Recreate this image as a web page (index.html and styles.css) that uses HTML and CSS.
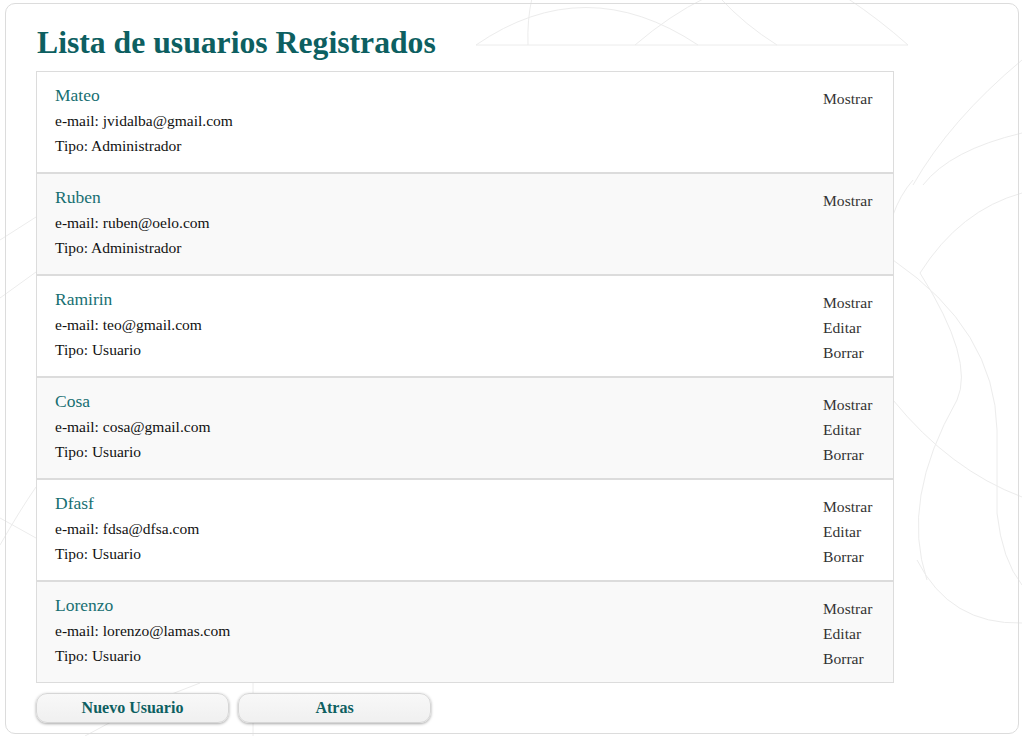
FILE: index.html
```html
<!DOCTYPE html>
<html lang="es">
<head>
<meta charset="utf-8">
<title>Lista de usuarios Registrados</title>
<link rel="stylesheet" href="styles.css">
</head>
<body>
<svg class="decor" width="1022" height="736" viewBox="0 0 1022 736" aria-hidden="true">
  <g fill="none" stroke="#ececec" stroke-width="1">
    <path d="M476 45 L908 45"/>
    <path d="M476 45 Q585 -30 698 45"/>
    <path d="M635 45 Q670 15 705 -2"/>
    <path d="M720 -2 Q745 25 777 45"/>
    <path d="M847 -2 Q880 20 908 45"/>
    <path d="M532 -2 Q527 20 528 45"/>
    <path d="M1022 60 Q950 120 913 185"/>
    <path d="M1022 133 Q950 150 923 185"/>
    <path d="M1022 193 Q960 210 920 273 Q975 360 957 400 Q900 500 927 580"/>
    <path d="M893 215 Q900 195 913 180"/>
    <path d="M893 260 Q995 330 997 430 L997 513 Q1002 560 1022 585"/>
    <path d="M893 400 Q950 470 1022 497"/>
    <path d="M917 560 Q950 625 1022 623"/>
    <path d="M36 217 L0 240"/>
    <path d="M36 272 L0 298"/>
    <path d="M0 545 Q20 510 36 487"/>
    <path d="M0 518 L36 538"/>
    <path d="M200 683 Q140 705 85 736"/>
    <path d="M253 683 L253 736"/>
  </g>
</svg>
<main class="panel">
  <h1 class="title">Lista de usuarios Registrados</h1>
  <ul class="user-list">
    <li class="user">
      <div class="info">
        <div class="name">Mateo</div>
        <div class="line">e-mail: jvidalba@gmail.com</div>
        <div class="line">Tipo: Administrador</div>
      </div>
      <div class="actions">
        <a class="action">Mostrar</a>
      </div>
    </li>
    <li class="user alt">
      <div class="info">
        <div class="name">Ruben</div>
        <div class="line">e-mail: ruben@oelo.com</div>
        <div class="line">Tipo: Administrador</div>
      </div>
      <div class="actions">
        <a class="action">Mostrar</a>
      </div>
    </li>
    <li class="user">
      <div class="info">
        <div class="name">Ramirin</div>
        <div class="line">e-mail: teo@gmail.com</div>
        <div class="line">Tipo: Usuario</div>
      </div>
      <div class="actions">
        <a class="action">Mostrar</a>
        <a class="action">Editar</a>
        <a class="action">Borrar</a>
      </div>
    </li>
    <li class="user alt">
      <div class="info">
        <div class="name">Cosa</div>
        <div class="line">e-mail: cosa@gmail.com</div>
        <div class="line">Tipo: Usuario</div>
      </div>
      <div class="actions">
        <a class="action">Mostrar</a>
        <a class="action">Editar</a>
        <a class="action">Borrar</a>
      </div>
    </li>
    <li class="user">
      <div class="info">
        <div class="name">Dfasf</div>
        <div class="line">e-mail: fdsa@dfsa.com</div>
        <div class="line">Tipo: Usuario</div>
      </div>
      <div class="actions">
        <a class="action">Mostrar</a>
        <a class="action">Editar</a>
        <a class="action">Borrar</a>
      </div>
    </li>
    <li class="user alt">
      <div class="info">
        <div class="name">Lorenzo</div>
        <div class="line">e-mail: lorenzo@lamas.com</div>
        <div class="line">Tipo: Usuario</div>
      </div>
      <div class="actions">
        <a class="action">Mostrar</a>
        <a class="action">Editar</a>
        <a class="action">Borrar</a>
      </div>
    </li>
  </ul>
  <div class="buttons">
    <button class="btn">Nuevo Usuario</button>
    <button class="btn">Atras</button>
  </div>
</main>
</body>
</html>
```
FILE: styles.css
```css
html, body {
  margin: 0;
  padding: 0;
  background: #ffffff;
}
body {
  font-family: "Liberation Serif", "Times New Roman", serif;
  color: #111;
  position: relative;
  width: 1022px;
  height: 736px;
  overflow: hidden;
}
.decor {
  position: absolute;
  left: 0;
  top: 0;
  z-index: 0;
}
.panel {
  position: relative;
  z-index: 1;
  box-sizing: border-box;
  margin: 3px 3px 0 5px;
  height: 731px;
  border: 1px solid #dcdcdc;
  border-radius: 10px;
  padding: 0 0 0 30px;
}
.title {
  margin: 20px 0 10px 1px;
  font-size: 31.7px;
  line-height: 37px;
  font-weight: bold;
  color: #0d5f61;
}
.user-list {
  list-style: none;
  margin: 0;
  padding: 0;
  width: 858px;
}
.user {
  box-sizing: border-box;
  height: 102px;
  border: 1px solid #dcdcdc;
  background: #ffffff;
  display: flex;
  justify-content: space-between;
  padding: 11px 20px 0 18px;
  font-size: 15.5px;
  line-height: 25px;
}
.user.alt {
  background: #f9f9f9;
}
.name {
  color: #176f72;
  font-size: 17.5px;
}
.line {
  color: #111;
}
.actions {
  display: flex;
  flex-direction: column;
  width: 50px;
  padding-top: 3px;
}
.action {
  color: #333;
  font-size: 15.6px;
}
.buttons {
  display: flex;
  gap: 9px;
  margin-top: 10px;
}
.btn {
  width: 193px;
  height: 30px;
  border: 1px solid #d6d6d6;
  border-radius: 11px;
  background: linear-gradient(#f8f8f8, #f0f0f0);
  box-shadow: 0 1px 3px rgba(0, 0, 0, 0.35);
  font-family: "Liberation Serif", "Times New Roman", serif;
  font-weight: bold;
  font-size: 16px;
  color: #0d5f61;
  padding: 0;
}
```
